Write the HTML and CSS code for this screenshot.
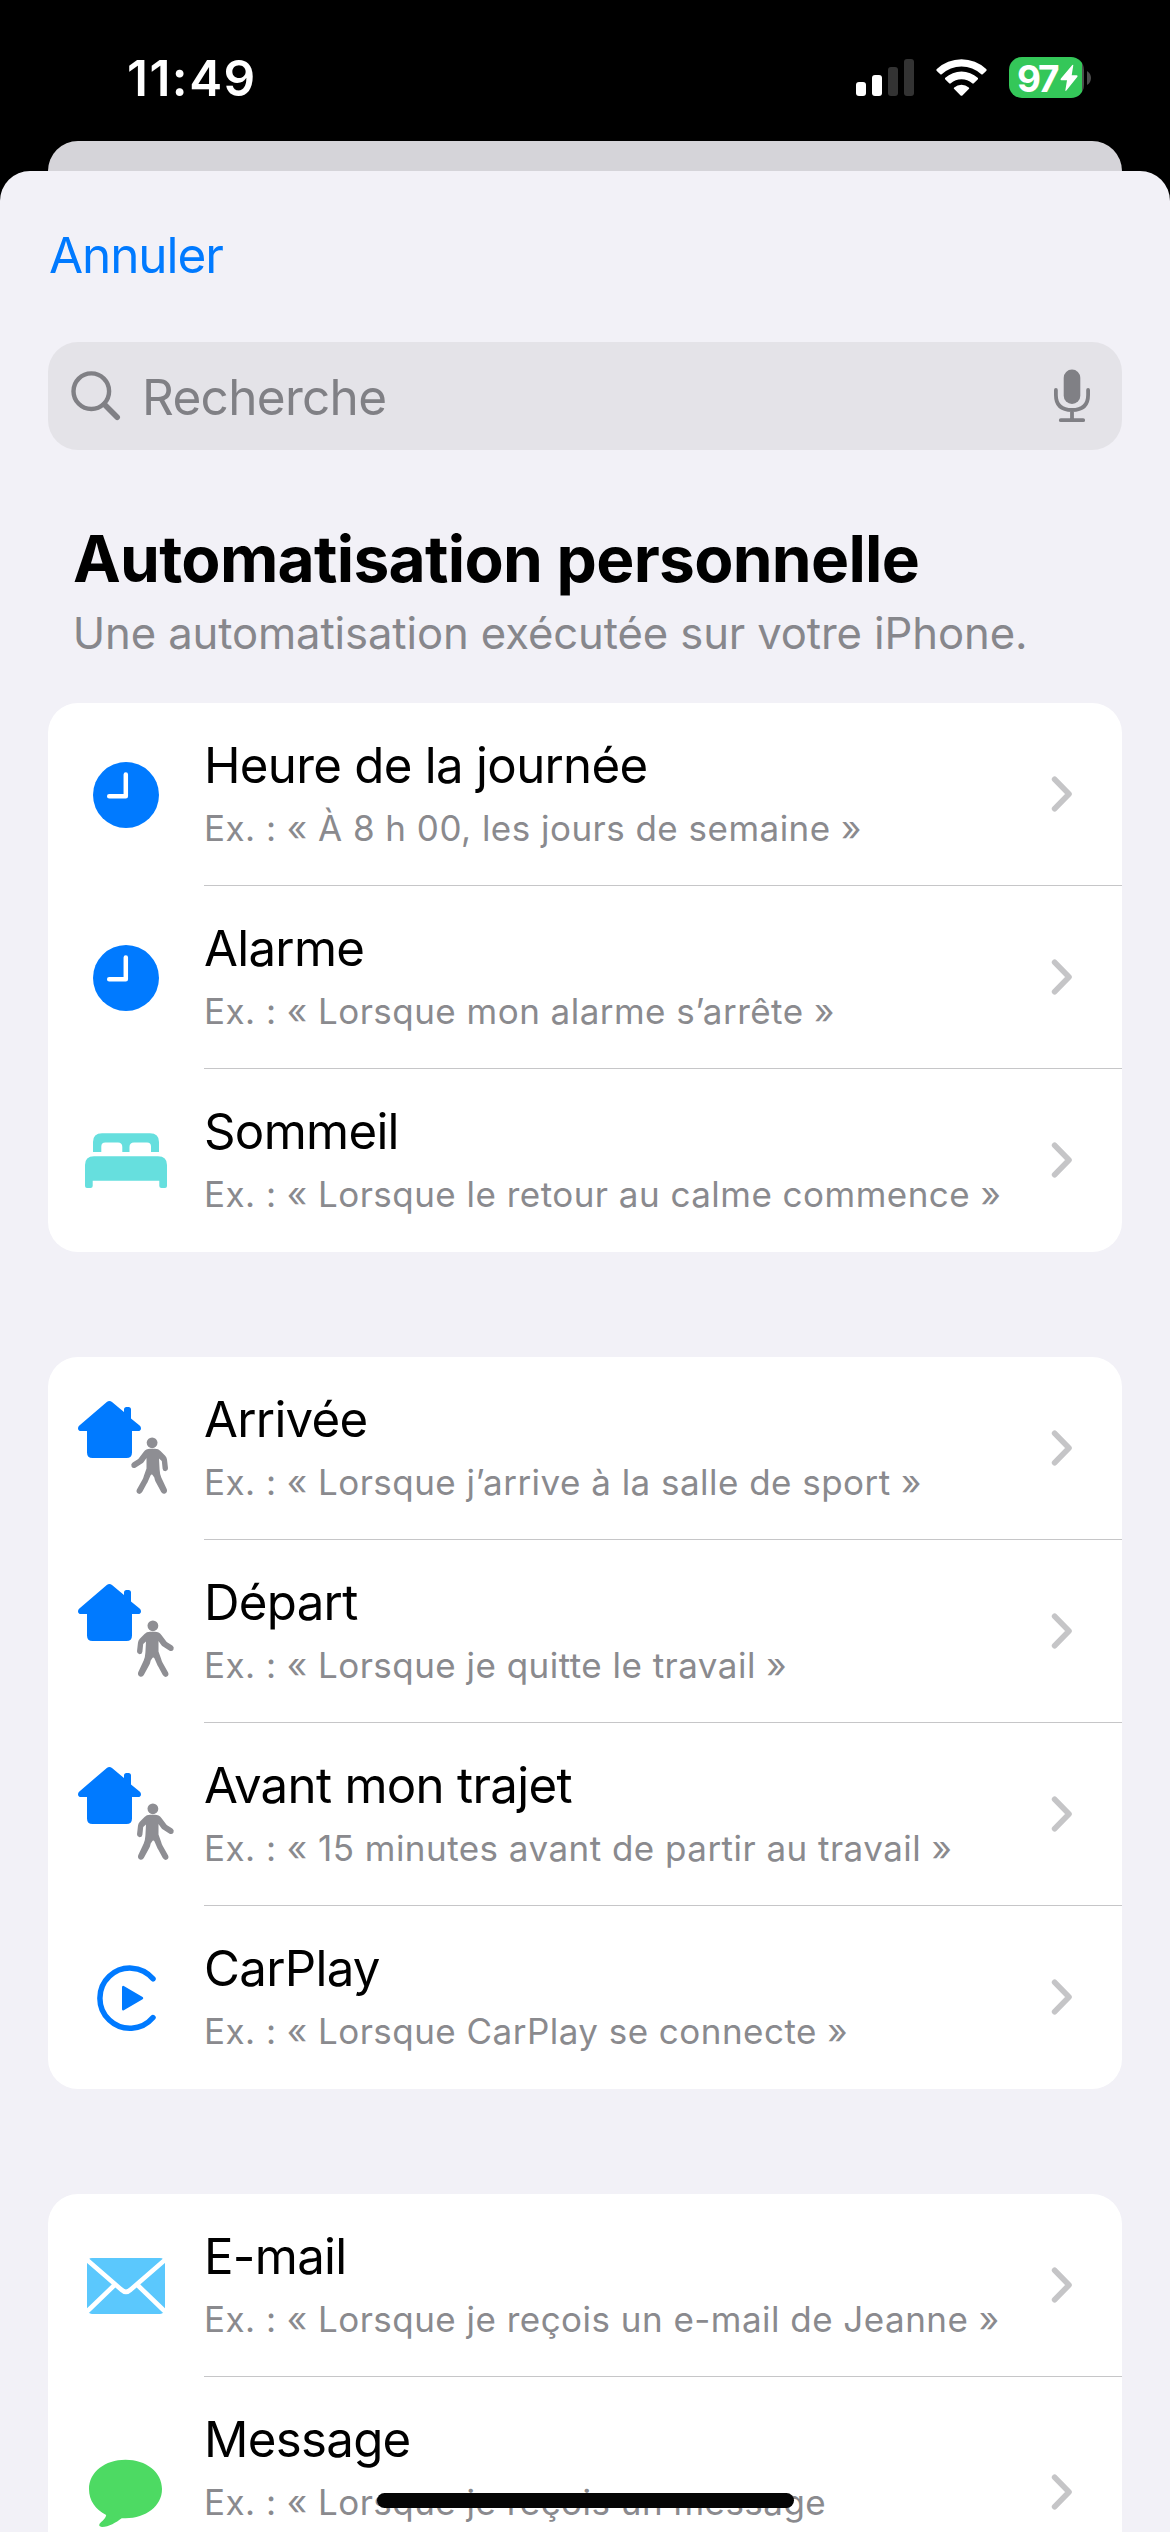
FILE: index.html
```
<!DOCTYPE html>
<html lang="fr">
<head>
<meta charset="utf-8">
<title>Automatisation personnelle</title>
<link rel="stylesheet" href="styles.css">
</head>
<body>
<svg class="sprite" aria-hidden="true">
  <symbol id="chevron" viewBox="0 0 22 38"><path d="M3.6 4.2 18 19 3.6 33.8" fill="none" stroke="#c5c5c7" stroke-width="5.6" stroke-linecap="round" stroke-linejoin="round"/></symbol>
  <symbol id="clock" viewBox="0 0 156 183"><circle cx="78" cy="92" r="33" fill="#007aff"/><path d="M77.8 71.6V93.3H61.2" fill="none" stroke="#fff" stroke-width="4.5" stroke-linecap="round" stroke-linejoin="round"/></symbol>
  <symbol id="house" viewBox="0 0 156 183"><path fill="#007aff" d="M58.8 45Q61.4 43 64 45L76 55V52.5Q76 50 78.5 50H80.5Q83 50 83 52.5V61.5L91.6 68.5Q93 69.7 93 71.2Q93 74 90 74H84V95.5Q84 101 78.5 101H44.500Q39 101 39 95.500V74H33Q30 74 30 71.200Q30 69.600 31.400 68.400Z"/></symbol>
  <symbol id="walker" viewBox="0 0 156 183"><g fill="#8e8e93"><circle cx="104.100" cy="85.800" r="5.400"/><path d="M102 91.800H107Q110.500 91.800 112.500 94L117.200 98.800Q118.700 100.300 119 102.500L120 111.300Q120 114 117.500 114.300Q115 114.300 114.600 111.800L113.800 104L111 101.500L111.600 112.500Q111.800 117 113.300 120.500L118.800 132.300Q119.700 135.200 117.200 136.500Q114.600 137.500 113.200 135.100L107.500 124.500Q106.700 122.800 106.300 120.500L104.400 117.800Q103.300 117 102.500 118.500L100 124.300Q99.500 125.500 98.800 126.500L94.200 135.100Q92.600 137.700 90 136.600Q87.700 135.200 88.900 132.500L94.500 122.500Q95.500 120.500 96 118.500L98.500 111.500V101L95.500 105.200Q94.800 106 94 106.500L87.400 110.700Q84.800 111.800 83.500 109.400Q82.500 107 84.700 105.400L90.300 101.900L95.600 95Q98 91.800 102 91.800Z"/></g></symbol>
</svg>

<header class="status">
  <span class="status-time">11:49</span>
  <div class="status-icons">
    <svg width="58" height="37" viewBox="0 0 58 37"><g fill="#fff"><rect y="23" width="10" height="14" rx="3"/><rect x="16" y="16" width="10" height="21" rx="3"/></g><g fill="#333"><rect x="32" y="8" width="10" height="29" rx="3"/><rect x="48" width="10" height="37" rx="3"/></g></svg>
    <svg width="51" height="37" viewBox="0 0 51 37"><g fill="#fff"><path d="M.8 10Q-.1 11 .8 12L4.300 15.300Q5 15.900 5.700 15.300A29 29 0 0 1 45.300 15.300Q46 15.900 46.700 15.300L50.200 12Q51.100 11 50.200 10A36 36 0 0 0 .8 10Z"/><path d="M9.300 18.800Q8.500 19.600 9.300 20.400L13.200 24.300Q14 25 14.800 24.300A16.500 16.500 0 0 1 36.200 24.300Q37 25 37.800 24.300L41.700 20.400Q42.500 19.600 41.700 18.800A24 24 0 0 0 9.300 18.800Z"/><path d="M18.200 28.400Q17.400 29.200 18.200 30L24.600 36.400Q25.500 37.200 26.400 36.400L32.800 30Q33.600 29.200 32.800 28.400A11.500 11.500 0 0 0 18.200 28.400Z"/></g></svg>
    <div class="battery">
      <div class="battery-body">
        <span class="battery-level">97</span>
        <svg class="battery-bolt" width="18" height="28" viewBox="0 0 18 28"><path fill="#fff" d="M12.300 1Q13.600 0 13.200 1.800L11.700 11.300H16.500Q18.200 11.500 17.200 12.900L6.400 26.600Q5.200 27.600 5.400 26L7 16.300H1.400Q0 16 .9 14.600Z"/></svg>
      </div>
      <svg width="4" height="14" viewBox="0 0 4 14"><path fill="#4d4d4d" d="M0 0Q4 2.500 4 7T0 14Z"/></svg>
    </div>
  </div>
</header>

<div class="sheet-behind"></div>
<main class="sheet">
  <nav class="nav"><a class="cancel">Annuler</a></nav>

  <div class="search">
    <svg width="50" height="50" viewBox="0 0 50 50"><g fill="none" stroke="#808085" stroke-linecap="round"><circle cx="20.300" cy="20.200" r="17.800" stroke-width="4.400"/><path d="M33.500 33.500 46.200 46.200" stroke-width="5.600"/></g></svg>
    <span class="search-text">Recherche</span>
    <svg width="36" height="54" viewBox="0 0 36 54"><rect x="9.700" y=".5" width="16.600" height="34.500" rx="8.300" fill="#808085"/><path d="M1.900 21V26Q1.900 41 18 41T34.100 26V21M18 41V51M6.800 51.200H29.200" fill="none" stroke="#808085" stroke-width="3.800" stroke-linecap="round"/></svg>
  </div>

  <h1 class="heading">Automatisation personnelle</h1>
  <p class="subheading">Une automatisation exécutée sur votre iPhone.</p>

  <section class="card">
    <div class="row">
      <svg class="row-icon"><use href="#clock"/></svg>
      <div class="row-body"><div class="row-text"><div class="row-title">Heure de la journée</div><div class="row-example">Ex. : « À 8 h 00, les jours de semaine »</div></div><svg class="chevron"><use href="#chevron"/></svg></div>
    </div>
    <div class="row">
      <svg class="row-icon"><use href="#clock"/></svg>
      <div class="row-body"><div class="row-text"><div class="row-title">Alarme</div><div class="row-example">Ex. : « Lorsque mon alarme s’arrête »</div></div><svg class="chevron"><use href="#chevron"/></svg></div>
    </div>
    <div class="row">
      <svg class="row-icon" viewBox="0 0 156 183"><path fill="#66dfde" d="M45 83V73Q45 64.200 54 64.200H102Q111 64.200 111 73V83H103V77.500Q103 73.500 99 73.500H86Q81.500 73.500 81.500 78V83H74.300V78Q74.300 73.500 70 73.500H57.300Q53.300 73.500 53.300 77.500V83ZM37 96Q37 87.200 46 87.200H110Q119 87.200 119 96V117Q119 119 117 119H113.500Q111.300 119 111.300 117V111.800H44.700V117Q44.700 119 42.500 119H39Q37 119 37 117Z"/></svg>
      <div class="row-body"><div class="row-text"><div class="row-title">Sommeil</div><div class="row-example">Ex. : « Lorsque le retour au calme commence »</div></div><svg class="chevron"><use href="#chevron"/></svg></div>
    </div>
  </section>

  <section class="card">
    <div class="row">
      <svg class="row-icon"><use href="#house"/><use href="#walker"/></svg>
      <div class="row-body"><div class="row-text"><div class="row-title">Arrivée</div><div class="row-example">Ex. : « Lorsque j’arrive à la salle de sport »</div></div><svg class="chevron"><use href="#chevron"/></svg></div>
    </div>
    <div class="row">
      <svg class="row-icon"><use href="#house"/><use href="#walker" transform="translate(209 0) scale(-1 1)"/></svg>
      <div class="row-body"><div class="row-text"><div class="row-title">Départ</div><div class="row-example">Ex. : « Lorsque je quitte le travail »</div></div><svg class="chevron"><use href="#chevron"/></svg></div>
    </div>
    <div class="row">
      <svg class="row-icon"><use href="#house"/><use href="#walker" transform="translate(209 0) scale(-1 1)"/></svg>
      <div class="row-body"><div class="row-text"><div class="row-title">Avant mon trajet</div><div class="row-example">Ex. : « 15 minutes avant de partir au travail »</div></div><svg class="chevron"><use href="#chevron"/></svg></div>
    </div>
    <div class="row">
      <svg class="row-icon" viewBox="0 0 156 183"><path d="M105 72.800A30.100 30.100 0 1 0 105 111.600" fill="none" stroke="#007aff" stroke-width="5.500" stroke-linecap="round"/><path d="M75.200 81V103.200L94 92.100Z" fill="#007aff" stroke="#007aff" stroke-width="2.400" stroke-linejoin="round"/></svg>
      <div class="row-body"><div class="row-text"><div class="row-title">CarPlay</div><div class="row-example">Ex. : « Lorsque CarPlay se connecte »</div></div><svg class="chevron"><use href="#chevron"/></svg></div>
    </div>
  </section>

  <section class="card">
    <div class="row">
      <svg class="row-icon" viewBox="0 0 156 183"><rect x="39" y="64" width="78" height="56" rx="5" fill="#5bc8fd"/><path d="M38 65 73.500 95.800Q78 100 82.500 95.800L118 65M38 118.500 66 91.500M118 118.500 90 91.500" fill="none" stroke="#fff" stroke-width="4.600"/></svg>
      <div class="row-body"><div class="row-text"><div class="row-title">E-mail</div><div class="row-example">Ex. : « Lorsque je reçois un e-mail de Jeanne »</div></div><svg class="chevron"><use href="#chevron"/></svg></div>
    </div>
    <div class="row row-tall">
      <svg class="row-icon" viewBox="0 0 156 230"><path fill="#4dda63" d="M77.500 82.700C98 82.700 114 95 114 112S98 141.200 77.500 141.200H73.700C68 145.500 61 149.800 54 150Q50.200 149.600 51.600 146.800C54 143.800 57 142.800 58.200 138C47.500 132.800 41 123.500 41 112C41 95 57 82.700 77.500 82.700Z"/></svg>
      <div class="row-body"><div class="row-text"><div class="row-title">Message</div><div class="row-example">Ex. : « Lorsque je reçois un message</div></div><svg class="chevron"><use href="#chevron"/></svg></div>
    </div>
  </section>
</main>
<div class="home-indicator"></div>
</body>
</html>
```
FILE: styles.css
```
* {
  box-sizing: border-box;
}

body {
  margin: 0;
  position: relative;
  width: 1170px;
  height: 2532px;
  overflow: hidden;
  background: #000;
  color: #000;
  font-family: Inter, "Liberation Sans", sans-serif;
  display: flex;
  flex-direction: column;
}

svg {
  display: block;
  flex: none;
}

.sprite {
  position: absolute;
  width: 0;
  height: 0;
}

/* Status bar */
.status {
  flex: none;
  height: 141px;
  padding: 48px 79px 0 127px;
  display: flex;
  align-items: flex-start;
  justify-content: space-between;
  color: #fff;
}

.status-time {
  font-size: 49.5px;
  font-weight: 600;
  line-height: 60px;
  letter-spacing: 1.5px;
}

.status-icons {
  height: 59px;
  display: flex;
  align-items: center;
  gap: 22px;
}

.battery {
  display: flex;
  align-items: center;
  gap: 3px;
}

.battery-body {
  width: 75px;
  height: 41px;
  padding-left: 8px;
  border-radius: 13px;
  background: linear-gradient(90deg, #34c759 73.5px, #4d4d4d 73.5px);
  display: flex;
  align-items: center;
}

.battery-level {
  padding-top: 1px;
  width: 43px;
  font-size: 37px;
  font-weight: 700;
  line-height: 41px;
  letter-spacing: -2.4px;
}

/* Stacked sheets */
.sheet-behind {
  flex: none;
  height: 30px;
  margin: 0 48px;
  border-radius: 30px 30px 0 0;
  background: #d5d4d9;
}

.sheet {
  flex: 1;
  min-height: 0;
  overflow: hidden;
  padding: 54px 48px 0;
  border-radius: 30px 30px 0 0;
  background: #f2f1f7;
}

.nav {
  height: 117px;
  padding-left: 1px;
}

.cancel {
  color: #007aff;
  font-size: 49.5px;
  line-height: 60px;
  letter-spacing: -1.1px;
}

.search {
  height: 108px;
  padding: 0 32px 0 23px;
  border-radius: 30px;
  background: #e4e3e8;
  display: flex;
  align-items: center;
}

.search-text {
  flex: 1;
  padding: 2px 0 0 21px;
  color: #808085;
  font-size: 49.5px;
  line-height: 60px;
  letter-spacing: -0.7px;
}

.heading {
  margin: 70px 0 9px 25px;
  font-size: 64px;
  font-weight: 700;
  line-height: 78px;
  letter-spacing: -0.7px;
}

.subheading {
  margin: 0 0 42px 24.7px;
  color: #87878c;
  font-size: 43.6px;
  line-height: 54px;
  letter-spacing: -0.1px;
}

/* Trigger lists */
.card {
  margin-bottom: 105px;
  border-radius: 30px;
  background: #fff;
  overflow: hidden;
}

.row {
  height: 183px;
  display: flex;
}

.row-tall {
  height: 230px;
}

.row-icon {
  width: 156px;
  height: 183px;
}

.row-tall .row-icon {
  height: 230px;
}

.row-body {
  flex: 1;
  padding-right: 49px;
  border-bottom: 1px solid #c6c6c8;
  display: flex;
  align-items: center;
}

.row:last-child .row-body {
  border-bottom-color: transparent;
}

.row-text {
  flex: 1;
  align-self: flex-start;
  padding-top: 32px;
  white-space: nowrap;
}

.row-title {
  font-size: 49.2px;
  line-height: 60px;
  letter-spacing: -0.7px;
}

.row-example {
  margin-top: 10px;
  color: #8a8a8e;
  font-size: 35px;
  line-height: 46px;
  letter-spacing: 0.47px;
}

.chevron {
  width: 22px;
  height: 38px;
}

.home-indicator {
  position: absolute;
  left: 377px;
  top: 2493px;
  width: 417px;
  height: 15px;
  border-radius: 8px;
  background: #050505;
}
```
